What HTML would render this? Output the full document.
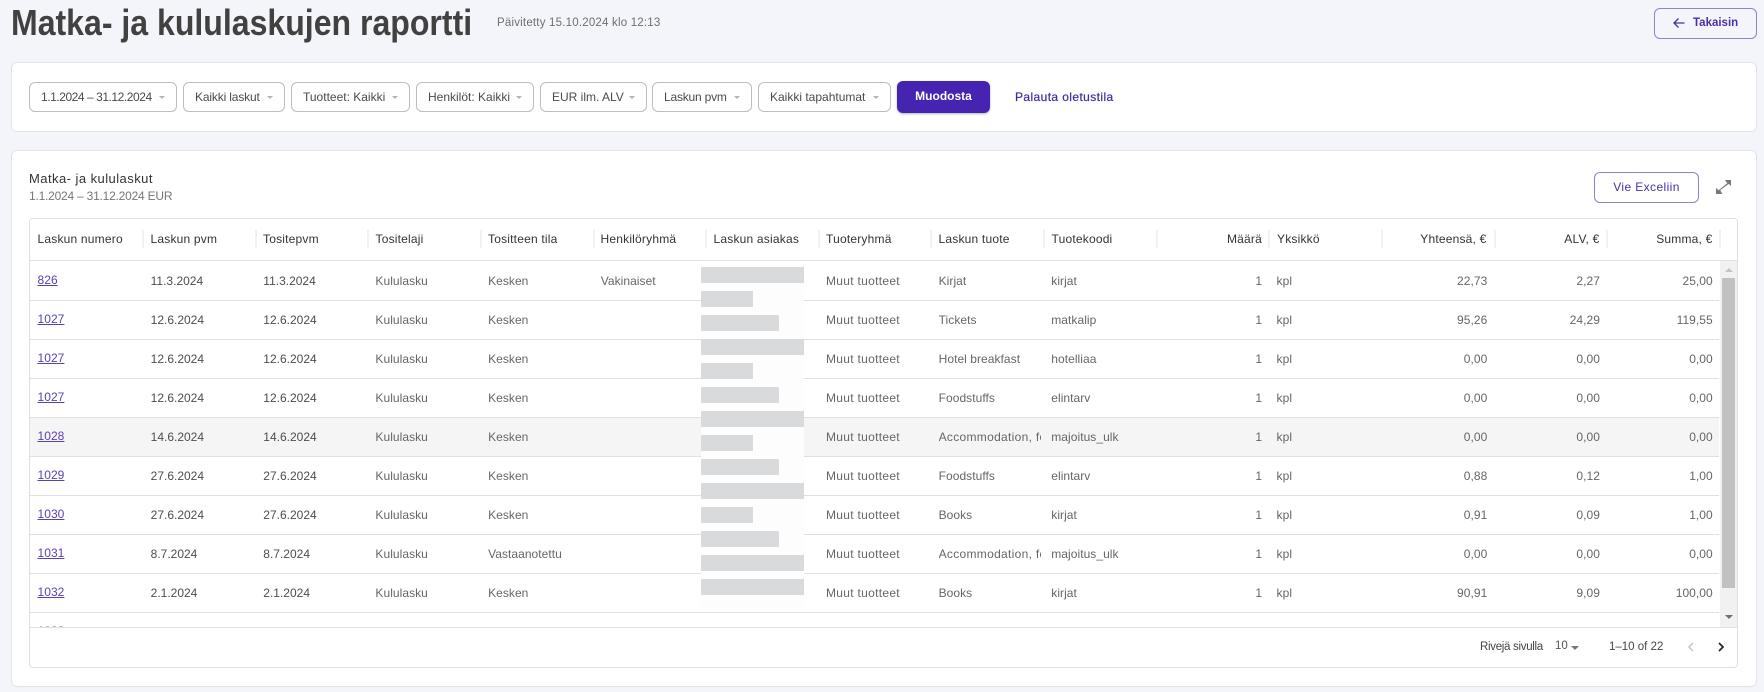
<!DOCTYPE html>
<html lang="fi"><head><meta charset="utf-8"><title>Matka- ja kululaskujen raportti</title>
<style>
*{box-sizing:border-box}
html,body{margin:0;padding:0}
body{width:1764px;height:692px;position:relative;overflow:hidden;background:#f4f5fa;font-family:"Liberation Sans",sans-serif;font-size:12px;color:#333}
.a{position:absolute;white-space:nowrap}
.card{position:absolute;left:11px;width:1746px;background:#fff;border:1px solid #e2e4ea;border-radius:6px}
.dd{position:absolute;top:82px;height:30px;border:1px solid #bdbdbd;border-radius:6px;background:#fff;line-height:28px;padding-left:11px;color:#4a4a4a;white-space:nowrap}
.dd:after{content:"";position:absolute;right:11px;top:13px;border-left:3.5px solid transparent;border-right:3.5px solid transparent;border-top:3.5px solid #b4b4b4}
.ol{position:absolute;border:1px solid #8f82c9;border-radius:6px;color:#4a2fa8;font-weight:500;text-align:center}
#wrap{position:absolute;left:29px;top:218px;width:1709px;height:450px;border:1px solid #e0e0e0;border-radius:4px;background:#fff}
#sc{position:absolute;left:0;top:42px;width:1707px;height:366px;overflow:hidden}
table{border-collapse:separate;border-spacing:0;table-layout:fixed;width:1689.75px;margin-left:-.5px}
col{width:112.65px}
td{height:39px;padding:0 8px;border-bottom:1px solid #e0e0e0;white-space:nowrap;overflow:hidden;color:#666;font-size:12px;vertical-align:middle;letter-spacing:.05px}
tr:first-child td{height:40px}
td.d{color:#4d4d4d;letter-spacing:0;padding-left:8.5px}
td.r{text-align:right;padding-right:6.5px}
td.m{letter-spacing:.3px}
td.c{padding-right:2px}
td a{color:#5b3fb5;text-decoration:underline;position:relative;top:-1px}
td span{display:block;overflow:hidden;letter-spacing:.3px}
tr.h td{background:#f5f5f5}
.th{position:absolute;top:232px;font-size:12px;line-height:14px;color:#333;white-space:nowrap;letter-spacing:.2px}
.sep{position:absolute;top:230px;width:2px;height:18px;background:#f1f1f1}
.g{position:absolute;left:701px;height:16px;background:#d9dadb}
</style></head><body>

<div class="a" id="t" style="left:11px;top:2px;font-size:36px;line-height:42px;font-weight:700;color:#414141;transform:scaleX(.89);transform-origin:0 0">Matka- ja kululaskujen raportti</div>
<div class="a" style="left:497px;top:16px;line-height:14px;color:#6f6f6f;font-size:11.5px;letter-spacing:.2px">Päivitetty 15.10.2024 klo 12:13</div>
<div class="ol" style="left:1654px;top:8px;width:103px;height:31px;line-height:29px;text-align:left;padding-left:38px;font-weight:700;font-size:11.5px">Takaisin
<svg style="position:absolute;left:18px;top:8px" width="12" height="12" viewBox="0 0 12 12" fill="none" stroke="#4a2fa8" stroke-width="1.3"><path d="M11.5 6H1M5.5 1.5 1 6l4.5 4.5"/></svg></div>

<div class="card" style="top:62px;height:70px"></div>
<div class="dd" style="left:29px;width:148px;letter-spacing:-.45px;font-size:12px">1.1.2024 – 31.12.2024</div>
<div class="dd" style="left:183px;width:102px;letter-spacing:-.15px">Kaikki laskut</div>
<div class="dd" style="left:291px;width:119px">Tuotteet: Kaikki</div>
<div class="dd" style="left:416px;width:118px">Henkilöt: Kaikki</div>
<div class="dd" style="left:540px;width:107px">EUR ilm. ALV</div>
<div class="dd" style="left:652px;width:100px;letter-spacing:-.2px">Laskun pvm</div>
<div class="dd" style="left:758px;width:133px">Kaikki tapahtumat</div>
<div class="a" style="left:897px;top:81px;width:93px;height:32px;line-height:31px;text-align:center;background:#4524b2;border-radius:6px;color:#fff;font-weight:700;box-shadow:0 1px 2px rgba(0,0,0,.3)">Muodosta</div>
<div class="a" style="left:1015px;top:90px;line-height:14px;color:#4329a0;font-weight:400;letter-spacing:.4px;-webkit-text-stroke:.2px #4329a0">Palauta oletustila</div>

<div class="card" style="top:150px;height:537px"></div>
<div class="a" style="left:29px;top:171px;font-size:13px;line-height:16px;color:#333;letter-spacing:.45px">Matka- ja kululaskut</div>
<div class="a" style="left:29px;top:189px;font-size:12px;line-height:14px;color:#777;letter-spacing:-.22px">1.1.2024 – 31.12.2024 EUR</div>
<div class="ol" style="left:1594px;top:172px;width:105px;height:31px;line-height:29px;background:#fff;letter-spacing:.4px">Vie Exceliin</div>
<svg class="a" style="left:1716px;top:180px" width="15" height="14" viewBox="0 0 15 14" fill="#777"><path d="M15 0v6l-2.2-2.1-8.6 6.2L6.4 14H0V8l2.6 2.3 8.6-7L9 0z"/></svg>

<div id="wrap">
<div id="sc"><table><colgroup><col><col><col><col><col><col><col><col><col><col><col><col><col><col><col></colgroup>
<tr><td><a>826</a></td><td class="d">11.3.2024</td><td class="d">11.3.2024</td><td>Kululasku</td><td>Kesken</td><td>Vakinaiset</td><td></td><td class="m">Muut tuotteet</td><td>Kirjat</td><td>kirjat</td><td class="r">1</td><td>kpl</td><td class="r">22,73</td><td class="r">2,27</td><td class="r">25,00</td></tr>
<tr><td><a>1027</a></td><td class="d">12.6.2024</td><td class="d">12.6.2024</td><td>Kululasku</td><td>Kesken</td><td></td><td></td><td class="m">Muut tuotteet</td><td>Tickets</td><td>matkalip</td><td class="r">1</td><td>kpl</td><td class="r">95,26</td><td class="r">24,29</td><td class="r">119,55</td></tr>
<tr><td><a>1027</a></td><td class="d">12.6.2024</td><td class="d">12.6.2024</td><td>Kululasku</td><td>Kesken</td><td></td><td></td><td class="m">Muut tuotteet</td><td>Hotel breakfast</td><td>hotelliaa</td><td class="r">1</td><td>kpl</td><td class="r">0,00</td><td class="r">0,00</td><td class="r">0,00</td></tr>
<tr><td><a>1027</a></td><td class="d">12.6.2024</td><td class="d">12.6.2024</td><td>Kululasku</td><td>Kesken</td><td></td><td></td><td class="m">Muut tuotteet</td><td>Foodstuffs</td><td>elintarv</td><td class="r">1</td><td>kpl</td><td class="r">0,00</td><td class="r">0,00</td><td class="r">0,00</td></tr>
<tr class="h"><td><a>1028</a></td><td class="d">14.6.2024</td><td class="d">14.6.2024</td><td>Kululasku</td><td>Kesken</td><td></td><td></td><td class="m">Muut tuotteet</td><td class="c"><span>Accommodation, food</span></td><td>majoitus_ulk</td><td class="r">1</td><td>kpl</td><td class="r">0,00</td><td class="r">0,00</td><td class="r">0,00</td></tr>
<tr><td><a>1029</a></td><td class="d">27.6.2024</td><td class="d">27.6.2024</td><td>Kululasku</td><td>Kesken</td><td></td><td></td><td class="m">Muut tuotteet</td><td>Foodstuffs</td><td>elintarv</td><td class="r">1</td><td>kpl</td><td class="r">0,88</td><td class="r">0,12</td><td class="r">1,00</td></tr>
<tr><td><a>1030</a></td><td class="d">27.6.2024</td><td class="d">27.6.2024</td><td>Kululasku</td><td>Kesken</td><td></td><td></td><td class="m">Muut tuotteet</td><td>Books</td><td>kirjat</td><td class="r">1</td><td>kpl</td><td class="r">0,91</td><td class="r">0,09</td><td class="r">1,00</td></tr>
<tr><td><a>1031</a></td><td class="d">8.7.2024</td><td class="d">8.7.2024</td><td>Kululasku</td><td>Vastaanotettu</td><td></td><td></td><td class="m">Muut tuotteet</td><td class="c"><span>Accommodation, food</span></td><td>majoitus_ulk</td><td class="r">1</td><td>kpl</td><td class="r">0,00</td><td class="r">0,00</td><td class="r">0,00</td></tr>
<tr><td><a>1032</a></td><td class="d">2.1.2024</td><td class="d">2.1.2024</td><td>Kululasku</td><td>Kesken</td><td></td><td></td><td class="m">Muut tuotteet</td><td>Books</td><td>kirjat</td><td class="r">1</td><td>kpl</td><td class="r">90,91</td><td class="r">9,09</td><td class="r">100,00</td></tr>
<tr><td><a>1033</a></td><td colspan="14"></td></tr>
</table></div>
<div style="position:absolute;left:0;top:41px;width:1707px;height:1px;background:#e0e0e0"></div>
<div style="position:absolute;left:0;top:408px;width:1707px;height:1px;background:#e0e0e0"></div>
<!-- scrollbar -->
<div style="position:absolute;left:1690px;top:42px;width:17px;height:366px;background:#f1f1f1"></div>
<div style="position:absolute;left:1692px;top:59px;width:13px;height:310px;background:#c1c1c1"></div>
<div style="position:absolute;left:1695px;top:49px;border-left:4px solid transparent;border-right:4px solid transparent;border-bottom:4px solid #c4c4c4"></div>
<div style="position:absolute;left:1695px;top:396px;border-left:4px solid transparent;border-right:4px solid transparent;border-top:4px solid #6e6e6e"></div>
</div>

<div class="th" style="left:37.5px">Laskun numero</div>
<div class="th" style="left:150.5px">Laskun pvm</div>
<div class="th" style="left:263px">Tositepvm</div>
<div class="th" style="left:375.5px">Tositelaji</div>
<div class="th" style="left:488px">Tositteen tila</div>
<div class="th" style="left:600.5px">Henkilöryhmä</div>
<div class="th" style="left:713.5px">Laskun asiakas</div>
<div class="th" style="left:826px">Tuoteryhmä</div>
<div class="th" style="left:938.5px">Laskun tuote</div>
<div class="th" style="left:1051.5px">Tuotekoodi</div>
<div class="th" style="right:502px">Määrä</div>
<div class="th" style="left:1277px">Yksikkö</div>
<div class="th" style="right:277.5px">Yhteensä, €</div>
<div class="th" style="right:164.5px">ALV, €</div>
<div class="th" style="right:51.5px">Summa, €</div>
<div class="sep" style="left:142px"></div><div class="sep" style="left:255px"></div><div class="sep" style="left:367px"></div><div class="sep" style="left:480px"></div><div class="sep" style="left:593px"></div><div class="sep" style="left:705px"></div><div class="sep" style="left:818px"></div><div class="sep" style="left:930px"></div><div class="sep" style="left:1043px"></div><div class="sep" style="left:1156px"></div><div class="sep" style="left:1268px"></div><div class="sep" style="left:1381px"></div><div class="sep" style="left:1494px"></div><div class="sep" style="left:1606px"></div><div class="sep" style="left:1719px"></div>

<!-- redaction block -->
<div class="a" style="left:701px;top:262px;width:103px;height:345px;background:#fdfdfd"></div>
<div class="g" style="top:267px;width:103px"></div>
<div class="g" style="top:291px;width:52px"></div>
<div class="g" style="top:315px;width:78px"></div>
<div class="g" style="top:339px;width:103px"></div>
<div class="g" style="top:363px;width:52px"></div>
<div class="g" style="top:387px;width:78px"></div>
<div class="g" style="top:411px;width:103px"></div>
<div class="g" style="top:435px;width:52px"></div>
<div class="g" style="top:459px;width:78px"></div>
<div class="g" style="top:483px;width:103px"></div>
<div class="g" style="top:507px;width:52px"></div>
<div class="g" style="top:531px;width:78px"></div>
<div class="g" style="top:555px;width:103px"></div>
<div class="g" style="top:579px;width:103px"></div>

<!-- footer -->
<div class="a" style="left:1480px;top:640px;line-height:14px;color:#444;font-size:11.5px;letter-spacing:-.3px">Rivejä sivulla</div>
<div class="a" style="left:1555px;top:639px;line-height:14px;color:#555;font-size:11.5px">10</div>
<div class="a" style="left:1571px;top:646px;border-left:4px solid transparent;border-right:4px solid transparent;border-top:4px solid #777"></div>
<div class="a" style="left:1609px;top:640px;line-height:14px;color:#444;font-size:11.5px">1–10 of 22</div>
<svg class="a" style="left:1686px;top:641px" width="10" height="12" viewBox="0 0 10 12" fill="none" stroke="#c4c4c4" stroke-width="1.5"><path d="M7 2 3 6l4 4"/></svg>
<svg class="a" style="left:1716px;top:641px" width="10" height="12" viewBox="0 0 10 12" fill="none" stroke="#222" stroke-width="1.7"><path d="M3 2l4 4-4 4"/></svg>
</body></html>
